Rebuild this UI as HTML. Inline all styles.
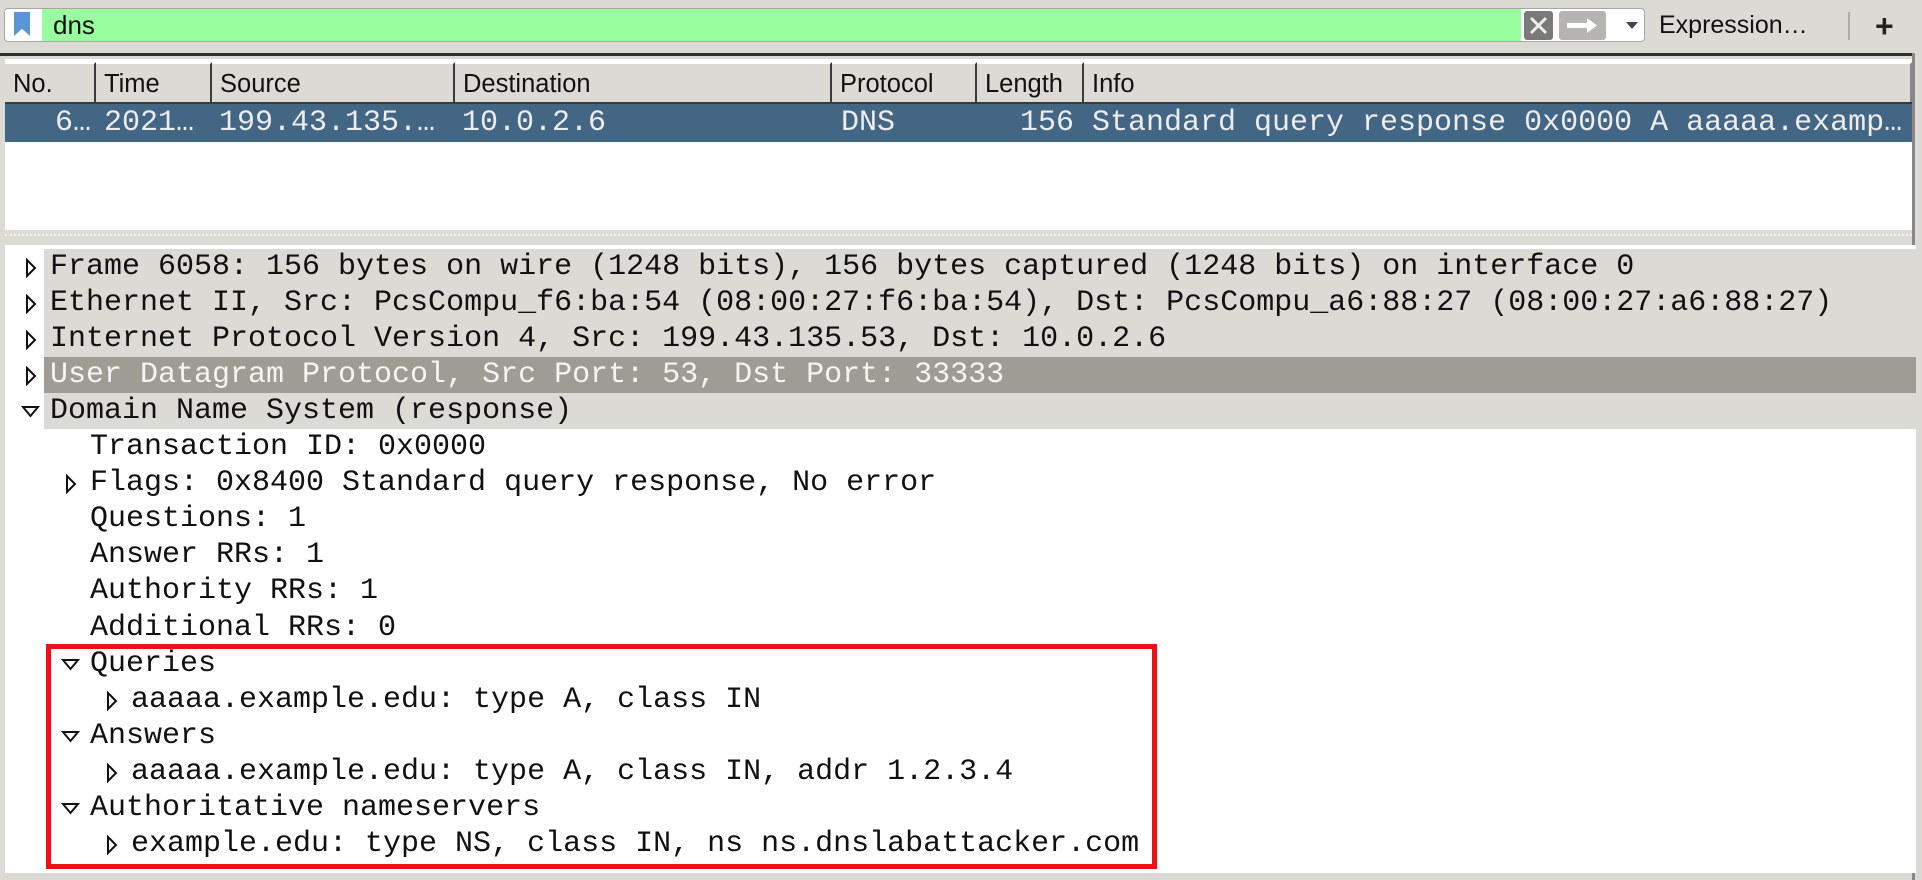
<!DOCTYPE html>
<html><head><meta charset="utf-8">
<style>
*{margin:0;padding:0;box-sizing:border-box}
body{width:1922px;height:880px;background:#dcdad5;position:relative;overflow:hidden;font-family:"Liberation Sans",sans-serif}
.abs{position:absolute}
.mono{font-family:"Liberation Mono",monospace;font-size:30px;white-space:pre}
#filter{left:4px;top:8px;width:1641px;height:34px;border:1px solid #a8a6a0;border-radius:4px;background:#fff;overflow:hidden}
#green{left:37px;top:0;width:1479px;height:32px;background:#99fe9e}
.hdr{top:62px;height:42px;background:#dcdad5;border-right:2px solid #3a3a3a;font-size:25.5px;color:#111;padding:6px 0 0 8px;border-top:2px solid #fff}
.row{left:5px;top:104px;width:1907px;height:38px;background:#436685}
.cell{top:104px;height:38px;line-height:38px;color:#ececec}
.tr{position:absolute;left:5px;width:1911px;height:36px;line-height:36px}
.tr .t{position:absolute;top:0}
</style></head><body>
<div id="filter" class="abs">
  <div class="abs" style="left:9px;top:3px;width:16px;height:24px;background:#5a95d8;clip-path:polygon(0 0,100% 0,100% 100%,50% 70%,0 100%)"></div>
  <div id="green" class="abs"></div>
  <div class="abs" style="left:48px;top:1px;font-size:26px;color:#111">dns</div>
  <div class="abs" style="left:1519px;top:2px;width:29px;height:29px;background:#7a7a78;border-radius:3px">
    <svg width="29" height="29"><path d="M7 7L22 22M22 7L7 22" stroke="#eee" stroke-width="3"/></svg></div>
  <div class="abs" style="left:1554px;top:2px;width:47px;height:29px;background:#b5b4b0;border-radius:3px">
    <svg width="47" height="29"><path d="M8 12h20v-5l10 7.5-10 7.5v-5H8z" fill="#fff"/></svg></div>
  <svg class="abs" style="left:1620px;top:11px" width="14" height="10"><path d="M1 2h12L7 9z" fill="#444"/></svg>
</div>
<div class="abs" style="left:1659px;top:11px;font-size:25px;color:#111">Expression…</div>
<div class="abs" style="left:1848px;top:12px;width:2px;height:28px;background:#b0aea8"></div>
<div class="abs" style="left:1875px;top:8px;font-size:32px;font-weight:bold;color:#222">+</div>
<div class="abs" style="left:0;top:53px;width:1912px;height:3px;background:#2e2e2e"></div>
<div class="abs" style="left:1912px;top:53px;width:3px;height:827px;background:#888"></div>
<div class="abs" style="left:5px;top:59px;width:1907px;height:171px;background:#fff"></div>
<div class="abs hdr" style="left:5px;width:91px">No.</div>
<div class="abs hdr" style="left:96px;width:116px">Time</div>
<div class="abs hdr" style="left:212px;width:243px">Source</div>
<div class="abs hdr" style="left:455px;width:377px">Destination</div>
<div class="abs hdr" style="left:832px;width:145px">Protocol</div>
<div class="abs hdr" style="left:977px;width:107px">Length</div>
<div class="abs hdr" style="left:1084px;width:828px;border-right:2px solid #888">Info</div>
<div class="abs" style="left:5px;top:102px;width:1907px;height:2px;background:#3a3a3a"></div>
<div class="abs row"></div>
<div class="abs cell mono" style="left:55px">6…</div>
<div class="abs cell mono" style="left:104px">2021…</div>
<div class="abs cell mono" style="left:219px">199.43.135.…</div>
<div class="abs cell mono" style="left:462px">10.0.2.6</div>
<div class="abs cell mono" style="left:841px">DNS</div>
<div class="abs cell mono" style="left:1020px">156</div>
<div class="abs cell mono" style="left:1092px">Standard query response 0x0000 A aaaaa.examp…</div>
<div class="abs" style="left:5px;top:234px;width:1907px;border-top:2px dotted #f4f4f2"></div>
<div class="abs" style="left:5px;top:245px;width:1911px;height:628px;background:#fff"></div>
<div id="tree" class="abs" style="left:0;top:249px;width:1922px"></div>
<div class="abs" style="left:46px;top:644px;width:1111px;height:225px;border:5px solid #ee1015"></div>
<script>
var rows=[
[0,'c','Frame 6058: 156 bytes on wire (1248 bits), 156 bytes captured (1248 bits) on interface 0','g'],
[0,'c','Ethernet II, Src: PcsCompu_f6:ba:54 (08:00:27:f6:ba:54), Dst: PcsCompu_a6:88:27 (08:00:27:a6:88:27)','g'],
[0,'c','Internet Protocol Version 4, Src: 199.43.135.53, Dst: 10.0.2.6','g'],
[0,'c','User Datagram Protocol, Src Port: 53, Dst Port: 33333','s'],
[0,'e','Domain Name System (response)','g'],
[1,'','Transaction ID: 0x0000',''],
[1,'c','Flags: 0x8400 Standard query response, No error',''],
[1,'','Questions: 1',''],
[1,'','Answer RRs: 1',''],
[1,'','Authority RRs: 1',''],
[1,'','Additional RRs: 0',''],
[1,'e','Queries',''],
[2,'c','aaaaa.example.edu: type A, class IN',''],
[1,'e','Answers',''],
[2,'c','aaaaa.example.edu: type A, class IN, addr 1.2.3.4',''],
[1,'e','Authoritative nameservers',''],
[2,'c','example.edu: type NS, class IN, ns ns.dnslabattacker.com','']];
var h='';
rows.forEach(function(r,i){
 var top=i*36.05, tx=[50,90,131][r[0]], ax=tx-31;
 var bg=r[3]=='g'?'#dcdad5':r[3]=='s'?'#9f9c96':'transparent';
 var col=r[3]=='s'?'#f4f4f2':'#111';
 var tri=r[1]=='c'?'<svg style="position:absolute;left:'+ax+'px;top:9px" width="14" height="20"><path d="M3 2L11 10 3 18z" fill="#fff" stroke="#111" stroke-width="2"/></svg>':
  r[1]=='e'?'<svg style="position:absolute;left:'+(ax-3)+'px;top:12px" width="20" height="14"><path d="M2 2h15L9.5 11z" fill="#fff" stroke="#111" stroke-width="2"/></svg>':'';
 h+='<div class="tr" style="top:'+top+'px">'+(r[3]?'<div style="position:absolute;left:39px;right:0;top:0;bottom:0;background:'+bg+'"></div>':'')+tri+'<div class="t mono" style="left:'+(tx-5)+'px;color:'+col+'">'+r[2]+'</div></div>';
});
document.getElementById('tree').innerHTML=h;
</script>
</body></html>
